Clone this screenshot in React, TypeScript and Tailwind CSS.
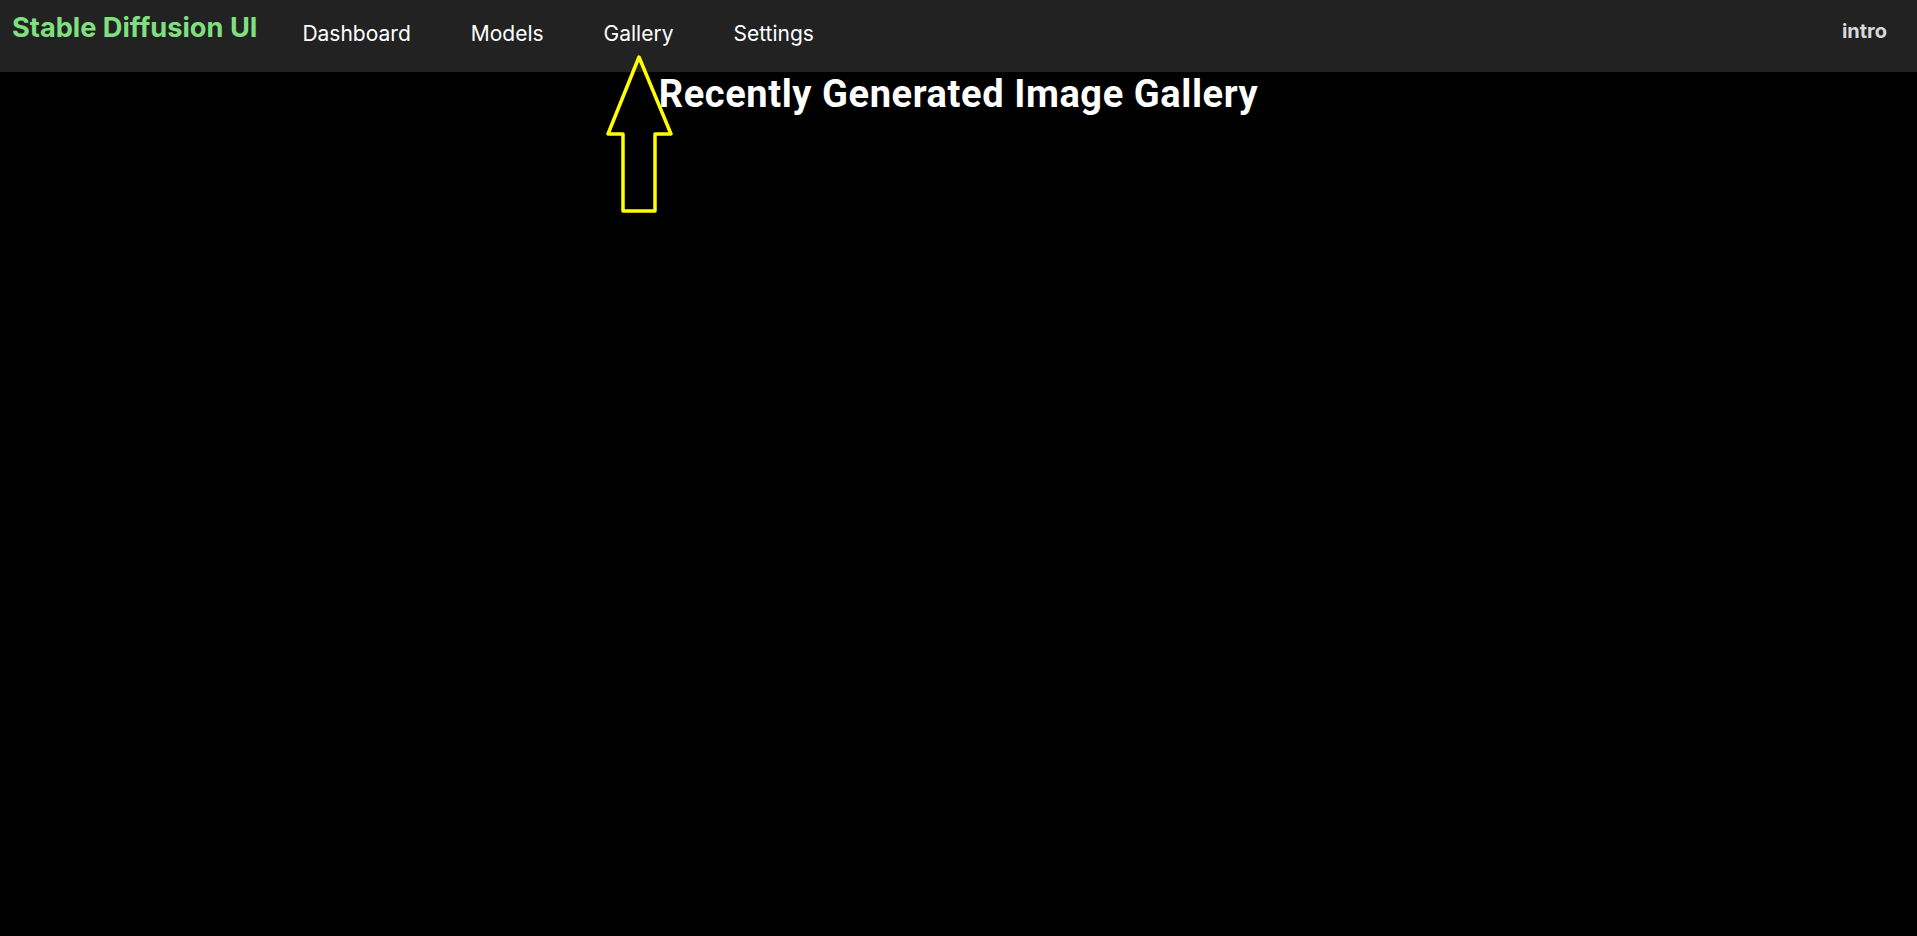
const navItems = ["Dashboard", "Models", "Gallery", "Settings"];

const UpArrow = () => (
  <svg
    className="absolute left-0 top-0 pointer-events-none"
    width="700"
    height="240"
    viewBox="0 0 700 240"
  >
    <polygon
      points="639,57 671,134 655,134 655,211 623,211 623,134 608,134"
      fill="none"
      stroke="#ffff00"
      strokeWidth="3.5"
      strokeLinejoin="round"
    />
  </svg>
);

const App = () => {
  return (
    <div className="relative min-h-screen w-full bg-black font-['Inter','Noto_Sans',sans-serif]">
      <header className="flex h-[72px] items-start bg-[#222222] pl-[12px] pr-[30px]">
        <div className="pt-[11px] text-[27.2px] font-bold leading-[34px] text-[#80e080]">
          Stable Diffusion UI
        </div>
        <nav className="ml-[45px] flex gap-[60px] pt-[20px]">
          {navItems.map((item) => (
            <a key={item} href="#" className="text-[21px] leading-[28px] text-white">
              {item}
            </a>
          ))}
        </nav>
        <div className="ml-auto pt-[17px] text-[20px] font-bold leading-[28px] text-[#d8d8d8]">
          intro
        </div>
      </header>
      <main>
        <h1 className="text-center font-['Roboto',sans-serif] text-[38px] font-bold leading-[44px] tracking-[0.6px] text-white">
          Recently Generated Image Gallery
        </h1>
      </main>
      <UpArrow />
    </div>
  );
};

export default App;
